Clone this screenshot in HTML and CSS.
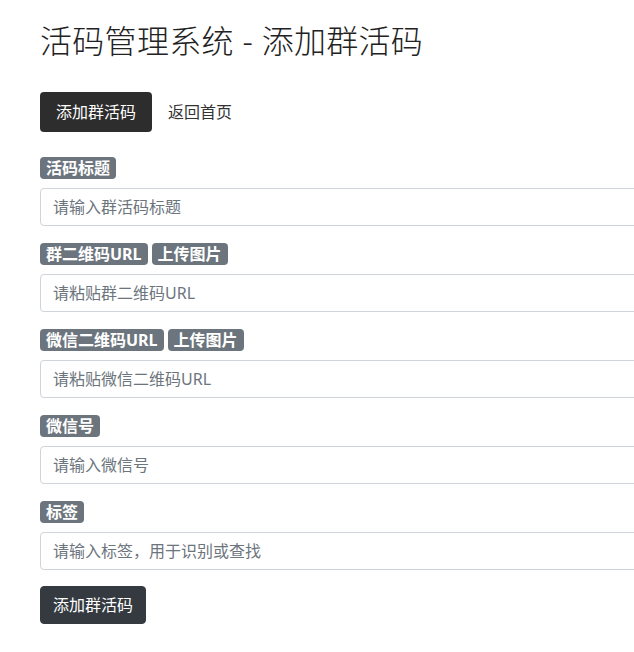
FILE: index.html
```html
<!DOCTYPE html>
<html lang="zh-CN">
<head>
<meta charset="utf-8">
<title>活码管理系统 - 添加群活码</title>
<link rel="stylesheet" href="styles.css">
</head>
<body>
<div class="container">
  <h2 class="title">活码管理系统 - 添加群活码</h2>
  <nav class="nav">
    <a class="nav-link active" href="#">添加群活码</a>
    <a class="nav-link" href="#">返回首页</a>
  </nav>
  <form class="form">
    <div class="form-group">
      <label class="label"><span class="badge">活码标题</span></label>
      <input class="form-control" type="text" placeholder="请输入群活码标题">
    </div>
    <div class="form-group">
      <label class="label"><span class="badge">群二维码URL</span><span class="badge">上传图片</span></label>
      <input class="form-control" type="text" placeholder="请粘贴群二维码URL">
    </div>
    <div class="form-group">
      <label class="label"><span class="badge">微信二维码URL</span><span class="badge">上传图片</span></label>
      <input class="form-control" type="text" placeholder="请粘贴微信二维码URL">
    </div>
    <div class="form-group">
      <label class="label"><span class="badge">微信号</span></label>
      <input class="form-control" type="text" placeholder="请输入微信号">
    </div>
    <div class="form-group">
      <label class="label"><span class="badge">标签</span></label>
      <input class="form-control" type="text" placeholder="请输入标签，用于识别或查找">
    </div>
    <button class="btn-dark" type="button">添加群活码</button>
  </form>
</div>
</body>
</html>
```

FILE: styles.css
```css
html, body {
  margin: 0;
  padding: 0;
  overflow: hidden;
  background: #fff;
}
body {
  font-family: "Noto Sans", "Noto Sans CJK SC", sans-serif;
  font-size: 16px;
  line-height: 1.5;
  color: #212529;
}
.container {
  padding: 22px 0 0 40px;
  width: 640px;
}
.title {
  margin: 0 0 32px;
  font-size: 32px;
  line-height: 38px;
  font-weight: 300;
  color: #222;
  letter-spacing: 0.3px;
}
.nav {
  display: flex;
  margin-bottom: 24px;
}
.nav-link {
  display: block;
  padding: 8px 16px;
  line-height: 24px;
  color: #333;
  text-decoration: none;
  border-radius: 4px;
}
.nav-link.active {
  background: #2d2d2d;
  color: #fff;
}
.form-group {
  margin-bottom: 16px;
}
.label {
  display: flex;
  align-items: center;
  gap: 4px;
  height: 24px;
  margin-bottom: 8px;
}
.badge {
  display: inline-block;
  background: #6c757d;
  color: #fff;
  font-size: 16px;
  font-weight: 700;
  line-height: 16px;
  padding: 3px 6px;
  border-radius: 4px;
}
.form-control {
  display: block;
  box-sizing: border-box;
  width: 100%;
  height: 38px;
  margin: 0;
  padding: 6px 12px;
  font-family: inherit;
  font-size: 16px;
  line-height: 24px;
  color: #495057;
  background: #fff;
  border: 1px solid #ced4da;
  border-radius: 4px;
  outline: none;
}
.form-control::placeholder {
  color: #6c757d;
  opacity: 1;
}
.btn-dark {
  display: inline-block;
  box-sizing: border-box;
  height: 38px;
  padding: 6px 12px;
  font-family: inherit;
  font-size: 16px;
  line-height: 24px;
  color: #fff;
  background: #343a40;
  border: 1px solid #343a40;
  border-radius: 4px;
}
```
